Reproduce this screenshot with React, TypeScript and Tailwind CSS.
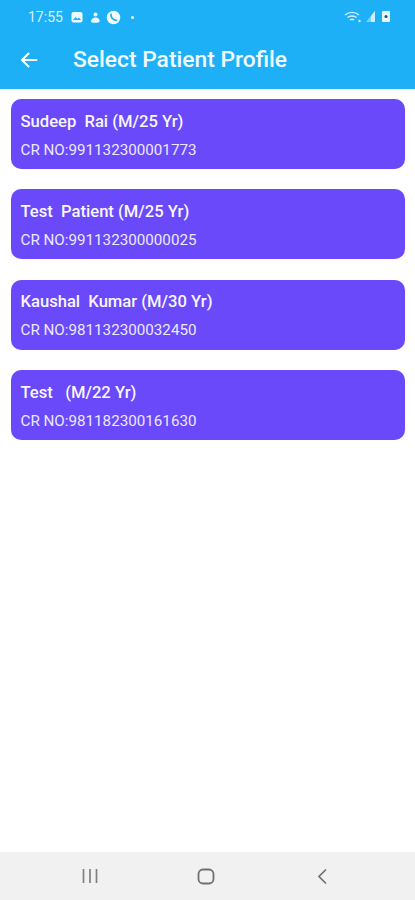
import React from "react";

const patients = [
  { name: "Sudeep  Rai (M/25 Yr)", cr: "CR NO:991132300001773" },
  { name: "Test  Patient (M/25 Yr)", cr: "CR NO:991132300000025" },
  { name: "Kaushal  Kumar (M/30 Yr)", cr: "CR NO:981132300032450" },
  { name: "Test   (M/22 Yr)", cr: "CR NO:981182300161630" },
];

export default function App() {
  return (
    <div className="w-[415px] h-[900px] bg-white flex flex-col overflow-hidden font-['Roboto',sans-serif]">
      <header className="h-[89px] shrink-0 bg-[#1eb0f6] flex flex-col text-white">
        <div className="h-[33px] pt-[1px] pl-[28px] pr-[24px] flex items-center justify-between">
          <div className="flex items-center gap-[5px] text-[14px] text-[#d8f1fd]">
            <span className="mr-[2px]">17:55</span>
            <svg width="14" height="13" viewBox="0 0 14 13" fill="none"><rect x="1.5" y="1" width="11" height="10.5" rx="2" fill="#eef9ff" /><path d="M3 9l2.5-3 2 2 1.5-1.5L11 9z" fill="#1eb0f6" /></svg>
            <svg width="12" height="13" viewBox="0 0 12 13" fill="#eef9ff"><circle cx="6.5" cy="3.5" r="2" /><path d="M2 11c0-3 2-4.500 4.500-4.500S11 8 10.500 11c-.2 1-8.300 1-8.500 0z" /></svg>
            <svg width="15" height="15" viewBox="0 0 15 15"><circle cx="7.500" cy="7.500" r="6.800" fill="#f4fbff" /><path d="M5 4.500c0 3 2 5.500 5.500 5.800" fill="none" stroke="#1eb0f6" strokeWidth="1.800" strokeLinecap="round" /></svg>
            <span className="ml-[5px] w-[3px] h-[3px] rounded-full bg-[#eef9ff]" />
          </div>
          <div className="flex items-center gap-[2px] mt-[-1px]">
            <svg width="19" height="14" viewBox="0 0 19 14" fill="none" stroke="#d9f2fe" strokeWidth="1.400"><path d="M1 5c4-3.500 10-3.500 14 0M3.500 7.500c2.500-2 6.500-2 9 0M6 10c1.300-1 2.700-1 4 0" /><circle cx="15.500" cy="11" r="1.200" fill="#d9f2fe" stroke="none" /></svg>
            <svg width="11" height="13" viewBox="0 0 11 13"><path d="M10 1v11H1z" fill="#7fd0f8" /><path d="M10 1v11H6V6z" fill="#cfeefd" /></svg>
            <svg width="10" height="13" viewBox="0 0 10 13" className="ml-[3px]"><rect x="1" y="1" width="8" height="11" rx="1" fill="#e6f7ff" /><circle cx="5" cy="6.500" r="1.500" fill="#24506a" /></svg>
          </div>
        </div>
        <div className="flex-1 flex items-center pl-[20px] pb-[2px]">
          <svg width="18" height="18" viewBox="0 0 18 18" fill="none" stroke="#fff" strokeWidth="2" strokeLinecap="round" strokeLinejoin="round"><path d="M16.500 9H2M8.500 2.500L2 9l6.500 6.500" /></svg>
          <h1 className="ml-[35px] text-[22.8px] leading-[28px] font-medium text-[#f1faff]">Select Patient Profile</h1>
        </div>
      </header>

      <main className="flex-1 flex flex-col gap-[20.4px] pl-[11px] pr-[10px] pt-[10px]">
        {patients.map((p) => (
          <div key={p.cr} className="h-[70px] rounded-[10px] bg-[#6a49fa] pl-[9.5px] pt-[11.5px] text-white">
            <div className="text-[16.6px] leading-[22px] font-medium whitespace-pre text-[#f8f6ff]">{p.name}</div>
            <div className="mt-[7px] text-[15.2px] leading-[20px] whitespace-pre text-[#ece8ff]">{p.cr}</div>
          </div>
        ))}
      </main>

      <nav className="h-[48px] shrink-0 bg-[#f1f1f1] flex items-center justify-center pr-[3px]">
        <div className="w-[116px] flex justify-center">
          <svg width="18" height="16" viewBox="0 0 18 16" fill="none" stroke="#808080" strokeWidth="1.700"><path d="M2.500 1v14M9 1v14M15.500 1v14" /></svg>
        </div>
        <div className="w-[116px] flex justify-center">
          <svg width="18" height="17" viewBox="0 0 18 17" fill="none" stroke="#707070" strokeWidth="1.800"><rect x="1.500" y="1.500" width="15" height="14" rx="4.500" /></svg>
        </div>
        <div className="w-[116px] flex justify-center">
          <svg width="12" height="17" viewBox="0 0 12 17" fill="none" stroke="#707070" strokeWidth="1.700"><path d="M10 1.500L3 8.500l7 7" /></svg>
        </div>
      </nav>
    </div>
  );
}
